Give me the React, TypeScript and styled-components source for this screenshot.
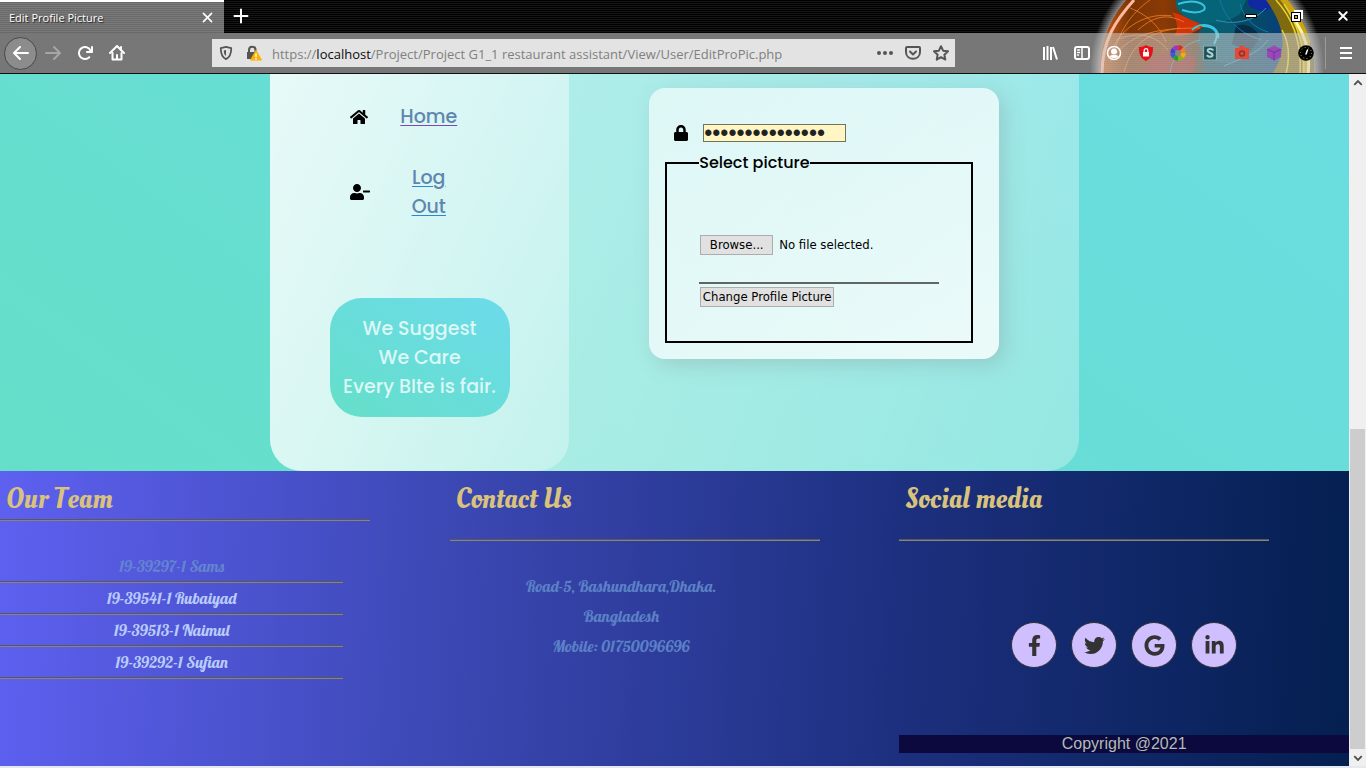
import React from 'react';
import styled, { createGlobalStyle } from 'styled-components';
import {
  FaHome,
  FaUserMinus,
  FaLock,
  FaFacebookF,
  FaTwitter,
  FaGoogle,
  FaLinkedinIn,
} from 'react-icons/fa';

const uiFont = `"Segoe UI", "Open Sans", "Noto Sans", sans-serif`;
const bodyFont = `Poppins, Inter, sans-serif`;
const formFont = `Tahoma, "DejaVu Sans Condensed", "DejaVu Sans", sans-serif`;
const scriptFont = `Lobster, "Liberation Serif", serif`;

const GlobalStyle = createGlobalStyle`
  *, *::before, *::after { box-sizing: border-box; }
  body { margin: 0; }
  h1, h2, p, ul { margin: 0; padding: 0; }
  button { font: inherit; color: inherit; cursor: pointer; }
`;

/* ---------- browser window ---------- */

const Window = styled.div`
  display: flex;
  flex-direction: column;
  min-height: 100vh;
  font-family: ${uiFont};
  background: #e4e8f2;
`;

const Chrome = styled.header`
  position: relative;
  flex: none;
  overflow: hidden;
  color: #fff;
  background: repeating-linear-gradient(#000 0 1px, #161616 1px 2px);
  border-bottom: 1px solid #111;
`;

const Orb = styled.svg`
  position: absolute;
  top: 0;
  right: 36px;
`;

const TabStrip = styled.div`
  position: relative;
  display: flex;
  height: 33px;
`;

const Tab = styled.div`
  display: flex;
  align-items: center;
  justify-content: space-between;
  width: 224px;
  padding: 0 10px 0 9px;
  border-top: 2px solid #fff;
  background: repeating-linear-gradient(#696969 0 1px, #7a7a7a 1px 2px);
  font-size: 11px;
  line-height: 16px;
  text-shadow: 1px 1px 1px #222;
`;

const PlainButton = styled.button<{ $w?: number }>`
  display: flex;
  align-items: center;
  justify-content: center;
  flex: none;
  width: ${(p) => p.$w ?? 32}px;
  height: 32px;
  padding: 0;
  border: 0;
  background: none;
`;

const WindowButtons = styled.div`
  display: flex;
  margin-left: auto;
`;

const Toolbar = styled.div`
  position: relative;
  display: flex;
  align-items: center;
  height: 40px;
  padding-left: 4px;
  background: repeating-linear-gradient(rgba(200, 200, 200, 0.54) 0 1px, rgba(206, 206, 206, 0.58) 1px 2px);
`;

const BackButton = styled(PlainButton)`
  height: 33px;
  border: 1px solid #484848;
  border-radius: 50%;
  background: #8c8c8c;
`;

const Spacer = styled.div`
  flex: 0 1 79px;
`;

const AddressBar = styled.div`
  display: flex;
  align-items: center;
  flex: 1 1 400px;
  min-width: 0;
  height: 28px;
  background: #e3e3e3;
  color: #555;
`;

const Address = styled.div`
  flex: 1;
  min-width: 0;
  padding: 1px 0 0 4px;
  overflow: hidden;
  white-space: nowrap;
  font-size: 13px;
  line-height: 20px;
  color: #808080;
  b {
    font-weight: 400;
    color: #0c0c0d;
  }
`;

const MenuButton = styled(PlainButton)`
  margin-left: 3px;
  border-left: 1px solid #9a9a9a;
`;

const Viewport = styled.div`
  display: flex;
  flex: 1;
  margin-bottom: 2px;
`;

const Page = styled.div`
  display: flex;
  flex-direction: column;
  flex: 1;
  min-width: 0;
`;

const ScrollTrack = styled.div`
  display: flex;
  flex-direction: column;
  flex: none;
  width: 17px;
  padding: 0 1px;
  background: #f0f0f0;
`;

const ScrollArrow = styled.button`
  display: flex;
  align-items: center;
  justify-content: center;
  height: 17px;
  padding: 0;
  border: 0;
  background: none;
`;

const ScrollGap = styled.div`
  flex: 338;
`;

const ScrollThumb = styled.div`
  flex: 320;
  background: #cdcdcd;
`;

/* ---------- profile area ---------- */

const Main = styled.main`
  display: flex;
  flex: 1;
  justify-content: center;
  font-family: ${bodyFont};
  background: linear-gradient(to right top, #65dfc9, #6cdbeb) left bottom / 100% 1000px;
`;

const Glass = styled.section`
  display: flex;
  width: 60%;
  border-radius: 0 0 32px 32px;
  background: linear-gradient(110deg, rgba(255, 255, 255, 0.54), rgba(255, 255, 255, 0.3));
`;

const Sidebar = styled.nav`
  width: 37%;
  padding: 28px 0 54px;
  border-radius: 0 0 32px 32px;
  background: linear-gradient(115deg, rgba(255, 255, 255, 0.66), rgba(255, 255, 255, 0.3));
`;

const NavRow = styled.div`
  display: flex;
  align-items: center;
  gap: 30px;
  margin: 0 0 32px 80px;
`;

const IconCell = styled.span`
  display: flex;
  flex: none;
  width: 20px;
`;

const NavLink = styled.a<{ $line: string }>`
  width: 58px;
  text-align: center;
  font-size: 19px;
  font-weight: 500;
  line-height: 29px;
  color: #6086af;
  text-decoration: underline ${(p) => p.$line} 1px;
  text-underline-offset: 2px;
`;

const Slogan = styled.p`
  width: 180px;
  margin: 77px auto 0;
  padding: 16px 0;
  border-radius: 32px;
  background: linear-gradient(to right top, #65dfc9, #6cdbeb);
  text-align: center;
  font-size: 19px;
  font-weight: 500;
  line-height: 29px;
  color: #dcf7f5;
`;

const Content = styled.div`
  display: flex;
  flex: 1;
  justify-content: center;
  align-items: flex-start;
`;

const Card = styled.form`
  width: 350px;
  margin-top: 14px;
  padding: 36px 26px 16px 16px;
  border-radius: 16px;
  background: linear-gradient(to left top, rgba(255, 255, 255, 0.8), rgba(255, 255, 255, 0.6));
  box-shadow: 6px 6px 20px rgba(122, 122, 122, 0.25);
`;

const PasswordRow = styled.label`
  display: flex;
  align-items: center;
  gap: 14px;
  margin: 0 0 9px 8px;
`;

const PasswordInput = styled.input`
  width: 143px;
  height: 18px;
  padding: 0;
  border: 1px solid #75715a;
  background: #fff6c4;
  color: #222;
  font-family: "Liberation Sans", sans-serif;
  font-size: 23px;
  line-height: 16px;
`;

const PictureSet = styled.fieldset`
  margin: 0;
  padding: 60px 32px 34px;
  border: 2px solid #000;
  font-family: ${formFont};
  font-size: 13px;
  line-height: 16px;
  color: #000;
`;

const Legend = styled.legend`
  padding: 0;
  font-family: ${bodyFont};
  font-size: 16px;
  font-weight: 500;
  line-height: 24px;
`;

const FileRow = styled.div`
  display: flex;
  align-items: center;
  gap: 6px;
  padding: 0 0 27px 1px;
  border-bottom: 2px solid #606664;
`;

const FormButton = styled.button<{ $w: number }>`
  width: ${(p) => p.$w}px;
  height: 20px;
  padding: 0;
  border: 1px solid #adadad;
  background: #e1e1e1;
  white-space: nowrap;
`;

const Submit = styled(FormButton)`
  display: block;
  margin: 3px 0 0 1px;
`;

/* ---------- footer ---------- */

const Footer = styled.footer`
  display: grid;
  grid-template-columns: repeat(3, 1fr);
  padding-bottom: 13px;
  font-family: ${scriptFont};
  background: linear-gradient(93deg, #5e60f0 0%, #3d49b6 32%, #1d3080 66%, #041f50 100%);
`;

const Column = styled.section``;

const Title = styled.h2<{ $gap: number }>`
  width: 370px;
  padding: 14px 0 ${(p) => p.$gap + 1}px 6px;
  border-bottom: 1px solid #87857a;
  box-shadow: inset 0 -1px #5a585c;
  font-family: "Oleo Script", "Liberation Serif", serif;
  font-size: 28px;
  font-weight: 400;
  line-height: 30px;
  color: #d9c27c;
`;

const Lines = styled.ul`
  width: 343px;
  margin-top: 30px;
  list-style: none;
  text-align: center;
  font-size: 16px;
  line-height: 30px;
  color: #5c80c6;
`;

const Member = styled.li<{ $dim?: boolean }>`
  padding-bottom: 1px;
  border-bottom: 1px solid #87857a;
  box-shadow: inset 0 -1px #5a585c;
  color: ${(p) => (p.$dim ? '#6484d0' : '#b9cbfa')};
`;

const Socials = styled.div`
  display: flex;
  justify-content: center;
  gap: 14px;
  margin: 81px 0 67px;
`;

const SocialLink = styled.a`
  display: flex;
  align-items: center;
  justify-content: center;
  width: 46px;
  height: 46px;
  border: 1px solid #333;
  border-radius: 50%;
  background: #d0bfff;
  color: #333;
  font-size: 21px;
`;

const Copyright = styled.p`
  background: #0b093d;
  text-align: center;
  font-family: Arial, "Liberation Sans", sans-serif;
  font-size: 16px;
  line-height: 18px;
  color: #b3bcb4;
`;

/* ---------- icons ---------- */

const Icon = ({ children, size = 16, color = 'currentColor' }: { children: React.ReactNode; size?: number; color?: string }) => (
  <svg width={size} height={size} viewBox="0 0 16 16" fill="none" stroke={color} strokeWidth="2" strokeLinecap="round" strokeLinejoin="round" aria-hidden>
    {children}
  </svg>
);

const arrow = 'M15 7H3.414l4.293-4.293a1 1 0 0 0-1.414-1.414l-6 6a1 1 0 0 0 0 1.414l6 6a1 1 0 0 0 1.414-1.414L3.414 9H15a1 1 0 0 0 0-2z';

const wheel = ['#d03030', '#f08030', '#f0b000', '#80b820', '#28a028', '#3060d0', '#4040e0', '#a030c0'];

const Wallpaper = () => (
  <Orb width="250" height="74" viewBox="1080 0 250 74" fill="none" aria-hidden>
    <defs>
      <radialGradient id="halo" gradientUnits="userSpaceOnUse" cx="1207" cy="70" r="117">
        <stop offset="0.9" stopColor="#fff" stopOpacity="0.6" />
        <stop offset="1" stopColor="#fff" stopOpacity="0" />
      </radialGradient>
      <linearGradient id="fire" x1="0" x2="1" y1="0" y2="0">
        <stop offset="0" stopColor="#c85c14" />
        <stop offset="0.14" stopColor="#7a3404" />
        <stop offset="0.3" stopColor="#8a3a06" />
        <stop offset="0.44" stopColor="#5c3410" />
        <stop offset="0.5" stopColor="#0a4a58" />
        <stop offset="0.75" stopColor="#06486a" />
        <stop offset="0.88" stopColor="#0a3c80" />
        <stop offset="1" stopColor="#1060a0" />
      </linearGradient>
      <clipPath id="ball"><circle cx="1207" cy="70" r="107" /></clipPath>
    </defs>
    <circle cx="1207" cy="70" r="117" fill="url(#halo)" />
    <g clipPath="url(#ball)">
      <rect x="1100" width="214" height="74" fill="url(#fire)" />
      <path d="M1172 12c12 4 22 8 32 14-8 6-16 10-30 10 6-8 2-16-2-24z" fill="#d03408" />
      <path d="M1140 74c6-14 22-24 46-20 14 2 10 12 6 20z" fill="#a02020" opacity=".7" />
      <path d="M1176 0h70l-6 14c-14 10-28 10-38 10-12-4-28-10-26-24z" fill="#066478" />
      <path d="M1200 30c16-12 36-12 44 6s-10 30-26 26-24-20-18-32z" fill="#0a6880" opacity=".6" />
      <path d="M1248 0h26c0 10-8 12-16 10s-10-4-10-10z" fill="#1028a0" />
      <path d="M1236 26c10-4 20 2 24 12l-10 14-18-8z" fill="#062c48" />
      <path d="M1266 0h30l20 30v44h-44c14-20 16-44-6-74z" fill="#806a10" />
      <path d="M1280 0c18 20 24 44 22 74h8V30l-12-30z" fill="#c8a414" />
      <path d="M1276 0c18 20 26 44 24 74M1284 4c16 24 20 44 20 70M1282 30c8 14 8 28 4 44" stroke="#e8d030" strokeWidth="1.500" />
      <path d="M1296 22c12 18 14 36 12 52" stroke="#fff4a0" strokeWidth="3" />
      <path d="M1112 50c10-24 36-38 60-34M1110 62c18-28 44-34 90-34M1130 8c20 8 30 20 36 34M1124 72c8-30 26-40 56-44M1150 0c-20 14-32 34-36 54M1138 30c20-18 34-14 46-8M1116 40c24-10 40-4 52 10" stroke="#f08028" strokeWidth="1" opacity=".8" />
      <path d="M1102 74c0-34 14-54 32-74" stroke="#ffb8a0" strokeWidth="3" />
      <path d="M1178 4c16-6 30 0 26 6-6 4-16 2-22 0M1192 30c10-10 28-4 26 8M1202 26c14 0 18 8 12 18" stroke="#38c4dc" strokeWidth="2" />
      <path d="M1170 74c2-18 14-30 30-34M1216 20c20 6 40 0 50-12M1224 66c18-8 34-12 44-26" stroke="#2898b4" strokeWidth="1" />
      <path d="M1220 0c6 20 20 34 42 40M1240 4c4 14 14 24 28 28" stroke="#1478a8" strokeWidth="1" />
    </g>
  </Orb>
);

const BrowserChrome = () => (
  <Chrome>
    <Wallpaper />
    <TabStrip>
      <Tab>
        <span>Edit Profile Picture</span>
        <Icon size={13}><path d="M3 3l10 10M13 3L3 13" /></Icon>
      </Tab>
      <PlainButton $w={34} aria-label="New tab">
        <Icon size={16}><path d="M8 1.500v13M1.500 8h13" /></Icon>
      </PlainButton>
      <WindowButtons>
        <PlainButton $w={46} aria-label="Minimise">
          <svg width="12" height="4" aria-hidden><path d="M.5.500h11v3H.5z" fill="#fff" stroke="#000" /></svg>
        </PlainButton>
        <PlainButton $w={46} aria-label="Restore">
          <svg width="12" height="12" aria-hidden>
            <path d="M3 1h8v8" fill="none" stroke="#fff" strokeWidth="2" />
            <path d="M2 4h6v6H2z" fill="#c89010" stroke="#000" strokeWidth="4" />
            <path d="M2 4h6v6H2z" fill="none" stroke="#fff" strokeWidth="2" />
            <path d="M4 6h2v2H4z" fill="#e0a010" />
          </svg>
        </PlainButton>
        <PlainButton $w={46} aria-label="Close">
          <Icon size={12}><path d="M3 3l10 10M13 3L3 13" strokeWidth="2.500" /></Icon>
        </PlainButton>
      </WindowButtons>
    </TabStrip>
    <Toolbar>
      <BackButton $w={33} aria-label="Back"><Icon><path d={arrow} fill="#fff" stroke="none" /></Icon></BackButton>
      <PlainButton aria-label="Forward">
        <Icon><path d={arrow} fill="#a6a6a6" stroke="none" transform="rotate(180 8 8)" /></Icon>
      </PlainButton>
      <PlainButton aria-label="Reload">
        <Icon><path d="M15 1a1 1 0 0 0-1 1v2.418A6.995 6.995 0 1 0 8 15a6.954 6.954 0 0 0 4.950-2.050 1 1 0 0 0-1.414-1.414A5.019 5.019 0 1 1 12.549 6H10a1 1 0 0 0 0 2h5a1 1 0 0 0 1-1V2a1 1 0 0 0-1-1z" fill="#fff" stroke="none" /></Icon>
      </PlainButton>
      <PlainButton aria-label="Home">
        <Icon><path d="M1 8l7-7 7 7" /><path d="M3.500 8v6.500h9V8M8 10v4" /><path d="M12 2v3" /></Icon>
      </PlainButton>
      <Spacer />
      <AddressBar>
        <PlainButton $w={28} aria-label="Site protection">
          <Icon size={14}><path d="M8 1L2 2.500c0 6 1 10 6 12.500 5-2.500 6-6.500 6-12.500z" /><path d="M8 4.500v7c-2-1.500-2.500-4-2.500-6.500z" fill="currentColor" stroke="none" /></Icon>
        </PlainButton>
        <PlainButton $w={28} aria-label="Connection">
          <svg width="16" height="16" viewBox="0 0 16 16" fill="none" aria-hidden>
            <path d="M3 7V5c0-4.500 6.500-4.500 6.500 0v2" stroke="#555" strokeWidth="2" />
            <path d="M1 7h10v7H1z" fill="#555" />
            <path d="M10 5.500l5.500 9.500h-11z" fill="#ffb000" stroke="#ffb000" strokeLinejoin="round" />
            <path d="M10 8.500v3.500M10 13v1.500" stroke="#fff" strokeWidth="1.500" />
          </svg>
        </PlainButton>
        <Address>https://<b>localhost</b>/Project/Project G1_1 restaurant assistant/View/User/EditProPic.php</Address>
        <PlainButton $w={28} aria-label="Page actions">
          <Icon><g fill="currentColor" stroke="none"><circle cx="2" cy="8" r="2" /><circle cx="8" cy="8" r="2" /><circle cx="14" cy="8" r="2" /></g></Icon>
        </PlainButton>
        <PlainButton $w={28} aria-label="Pocket">
          <Icon><path d="M2 2h12a1 1 0 0 1 1 1v4c0 9-14 9-14 0V3a1 1 0 0 1 1-1z" /><path d="M5 6.500l3 3 3-3" /></Icon>
        </PlainButton>
        <PlainButton $w={28} aria-label="Bookmark">
          <Icon><path d="M8 1.200l2.100 4.500 4.900.6-3.600 3.400.9 4.900L8 12.200l-4.300 2.400.9-4.900L1 6.300l4.900-.6z" /></Icon>
        </PlainButton>
      </AddressBar>
      <Spacer />
      <PlainButton aria-label="Library"><Icon><path d="M2 2v13M5.500 1v14M9 2v13M11 2l4 12.500" strokeLinecap="butt" /></Icon></PlainButton>
      <PlainButton aria-label="Sidebars"><Icon><rect x="1" y="2" width="14" height="12" rx="2" /><path d="M8 2v12M3.500 5h2M3.500 7.500h2M3.500 10h1" strokeWidth="1.500" /></Icon></PlainButton>
      <PlainButton aria-label="Account"><Icon><circle cx="8" cy="8" r="6.500" strokeWidth="1.500" /><circle cx="8" cy="6.500" r="3" fill="#fff" stroke="none" /><path d="M3.500 11c1-1.500 8-1.500 9 0-2 3-7 3-9 0z" fill="#fff" stroke="none" /></Icon></PlainButton>
      <PlainButton aria-label="Password shield"><Icon><path d="M8 0c2 1.500 4 2 7 2 0 7-1 11-7 14C2 13 1 9 1 2c3 0 5-.5 7-2z" fill="#e81018" stroke="none" /><path d="M6.200 7V5.500c0-2.500 3.600-2.500 3.600 0V7" stroke="#fff" strokeWidth="1.200" /><path d="M5 7h6v4.500H5z" fill="#fff" stroke="none" /></Icon></PlainButton>
      <PlainButton aria-label="Colour picker">
        <Icon>
          {wheel.map((c, i) => (
            <path key={c} d="M8 8L5.300 1Q8-.800 10.700 1z" fill={c} stroke="none" transform={`rotate(${i * 45 + 22} 8 8)`} />
          ))}
          <circle cx="8" cy="8" r="3" fill="#8c8480" stroke="none" />
        </Icon>
      </PlainButton>
      <PlainButton aria-label="Stylus"><Icon><rect x="1.500" y="1" width="13" height="14" rx="1" fill="#245058" stroke="#80b0b0" strokeWidth="1.200" /><path d="M10.800 4.800c-2-1.500-5.200-1-5.200.8 0 2.500 5 1.800 5 4.300 0 2-3.500 2.300-5.200.8" stroke="#a8d8d8" /></Icon></PlainButton>
      <PlainButton aria-label="Screenshot"><Icon><path d="M1 3h4l1-2h4l1 2h4v11H1z" fill="#e84838" stroke="none" /><circle cx="8" cy="8.500" r="2.500" stroke="#80392f" strokeWidth="1.500" /></Icon></PlainButton>
      <PlainButton aria-label="Package"><Icon><path d="M8 .5l7 3.500v8l-7 3.500L1 12V4z" fill="#9848b8" stroke="none" /><path d="M1.500 4.500L8 7.500l6.500-3M8 7.500V15" stroke="#6c3890" strokeWidth="1" /></Icon></PlainButton>
      <PlainButton aria-label="Speed dial"><Icon><circle cx="8" cy="8" r="7.800" fill="#000" stroke="none" /><circle cx="8" cy="8" r="5.500" stroke="#bba540" strokeWidth="1" strokeDasharray="1 2.400" strokeLinecap="butt" /><path d="M8 9l1.500-4" stroke="#fff" strokeWidth="1.500" /></Icon></PlainButton>
      <MenuButton $w={41} aria-label="Menu"><Icon size={12}><path d="M0 1.330h16M0 8h16M0 14.670h16" strokeWidth="2.670" strokeLinecap="butt" /></Icon></MenuButton>
    </Toolbar>
  </Chrome>
);

const members = ['19-39297-1 Sams', '19-39541-1 Rubaiyad', '19-39513-1 Naimul', '19-39292-1 Sufian'];
const socials = [
  { name: 'Facebook', Glyph: FaFacebookF },
  { name: 'Twitter', Glyph: FaTwitter },
  { name: 'Google', Glyph: FaGoogle },
  { name: 'LinkedIn', Glyph: FaLinkedinIn },
];

export default function App() {
  return (
    <Window>
      <GlobalStyle />
      <BrowserChrome />
      <Viewport>
        <Page>
          <Main>
            <Glass>
              <Sidebar>
                <NavRow>
                  <IconCell><FaHome size={18} /></IconCell>
                  <NavLink href="#home" $line="#7b48b4">Home</NavLink>
                </NavRow>
                <NavRow>
                  <IconCell><FaUserMinus size={20} /></IconCell>
                  <NavLink href="#logout" $line="#2a86d8">Log Out</NavLink>
                </NavRow>
                <Slogan>
                  We Suggest<br />We Care<br />Every BIte is fair.
                </Slogan>
              </Sidebar>
              <Content>
                <Card onSubmit={(e) => e.preventDefault()}>
                  <PasswordRow>
                    <FaLock size={16} />
                    <PasswordInput type="password" aria-label="Password" defaultValue="restaurant-2021" />
                  </PasswordRow>
                  <PictureSet>
                    <Legend>Select picture</Legend>
                    <FileRow>
                      <FormButton type="button" $w={73}>Browse...</FormButton>
                      <span>No file selected.</span>
                    </FileRow>
                    <Submit type="submit" $w={134}>Change Profile Picture</Submit>
                  </PictureSet>
                </Card>
              </Content>
            </Glass>
          </Main>
          <Footer>
            <Column>
              <Title $gap={4}>Our Team</Title>
              <Lines>
                {members.map((m, i) => (
                  <Member key={m} $dim={i === 0}>{m}</Member>
                ))}
              </Lines>
            </Column>
            <Column>
              <Title $gap={24}>Contact Us</Title>
              <Lines>
                <li>Road-5, Bashundhara,Dhaka.</li>
                <li>Bangladesh</li>
                <li>Mobile: 01750096696</li>
              </Lines>
            </Column>
            <Column>
              <Title $gap={24}>Social media</Title>
              <Socials>
                {socials.map(({ name, Glyph }) => (
                  <SocialLink key={name} href={`#${name.toLowerCase()}`} aria-label={name}><Glyph /></SocialLink>
                ))}
              </Socials>
              <Copyright>Copyright @2021</Copyright>
            </Column>
          </Footer>
        </Page>
        <ScrollTrack>
          <ScrollArrow aria-label="Scroll up"><Icon size={10} color="#505050"><path d="M2 11l6-6 6 6" strokeWidth="3" strokeLinecap="butt" strokeLinejoin="miter" /></Icon></ScrollArrow>
          <ScrollGap />
          <ScrollThumb />
          <ScrollArrow aria-label="Scroll down"><Icon size={10} color="#505050"><path d="M2 5l6 6 6-6" strokeWidth="3" strokeLinecap="butt" strokeLinejoin="miter" /></Icon></ScrollArrow>
        </ScrollTrack>
      </Viewport>
    </Window>
  );
}
